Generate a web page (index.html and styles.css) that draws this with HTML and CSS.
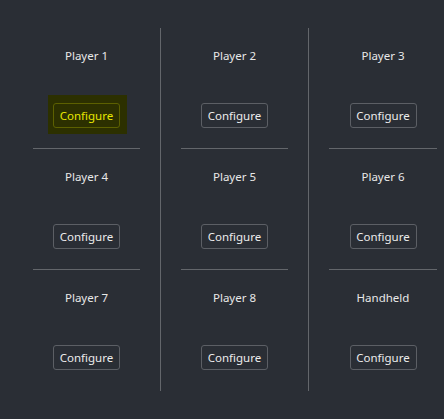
FILE: index.html
```html
<!DOCTYPE html>
<html>
<head>
<meta charset="utf-8">
<link rel="stylesheet" href="styles.css">
</head>
<body>
<div class="grid">
  <div class="col">
    <div class="cell"><div class="label">Player 1</div><button class="btn focused">Configure</button></div>
    <div class="sep"></div>
    <div class="cell"><div class="label">Player 4</div><button class="btn">Configure</button></div>
    <div class="sep"></div>
    <div class="cell last"><div class="label">Player 7</div><button class="btn">Configure</button></div>
  </div>
  <div class="col">
    <div class="cell"><div class="label">Player 2</div><button class="btn">Configure</button></div>
    <div class="sep"></div>
    <div class="cell"><div class="label">Player 5</div><button class="btn">Configure</button></div>
    <div class="sep"></div>
    <div class="cell last"><div class="label">Player 8</div><button class="btn">Configure</button></div>
  </div>
  <div class="col end">
    <div class="cell"><div class="label">Player 3</div><button class="btn">Configure</button></div>
    <div class="sep"></div>
    <div class="cell"><div class="label">Player 6</div><button class="btn">Configure</button></div>
    <div class="sep"></div>
    <div class="cell last"><div class="label">Handheld</div><button class="btn">Configure</button></div>
  </div>
</div>
</body>
</html>
```
FILE: styles.css
```css
body {
  margin: 0;
  padding: 0;
  background: #2a2e35;
  width: 444px;
  height: 419px;
  overflow: hidden;
  font-family: "Noto Sans", "Open Sans", sans-serif;
  font-size: 11.5px;
  color: #e8e8e8;
}
.grid {
  display: grid;
  grid-template-columns: 148px 148px 148px;
  padding: 28px 0 0 13px;
}
.col {
  display: flex;
  flex-direction: column;
  border-right: 1px solid #63666b;
}
.col.end {
  border-right: none;
}
.cell {
  height: 120px;
  display: flex;
  flex-direction: column;
  align-items: center;
  padding-top: 20px;
  box-sizing: border-box;
}
.cell.last {
  height: 121px;
}
.label {
  height: 16px;
  line-height: 16px;
  margin-bottom: 39px;
}
.sep {
  height: 1px;
  background: #63666b;
  margin: 0 20px;
}
.btn {
  position: relative;
  width: 67px;
  height: 25px;
  padding: 0;
  font: inherit;
  color: #ececec;
  background: transparent;
  border: 1px solid #5c5f65;
  border-radius: 3px;
  line-height: 21px;
}
.btn.focused {
  color: #e6e600;
  border-color: #5c6000;
}
.btn.focused::before {
  content: "";
  position: absolute;
  top: -9px;
  left: -6px;
  right: -8px;
  bottom: -7px;
  background: #2c3000;
  z-index: -1;
}
```
